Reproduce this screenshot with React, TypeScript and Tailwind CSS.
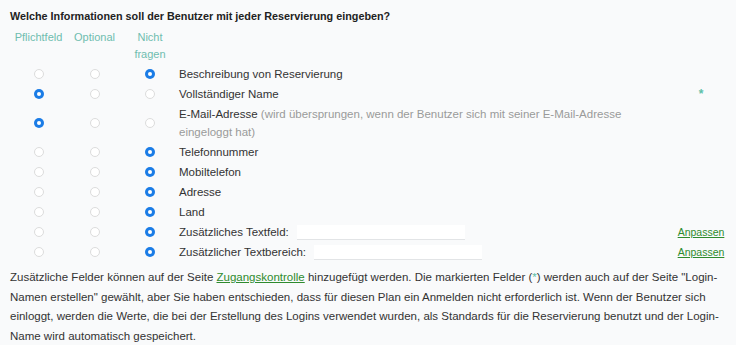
import React from "react";

type Choice = 0 | 1 | 2;

type Field = {
  label: string;
  hint?: string;
  choice: Choice;
  star?: boolean;
  input?: boolean;
};

const fields: Field[] = [
  { label: "Beschreibung von Reservierung", choice: 2 },
  { label: "Vollständiger Name", choice: 0, star: true },
  {
    label: "E-Mail-Adresse",
    hint: "(wird übersprungen, wenn der Benutzer sich mit seiner E-Mail-Adresse eingeloggt hat)",
    choice: 0,
  },
  { label: "Telefonnummer", choice: 2 },
  { label: "Mobiltelefon", choice: 2 },
  { label: "Adresse", choice: 2 },
  { label: "Land", choice: 2 },
  { label: "Zusätzliches Textfeld:", choice: 2, input: true },
  { label: "Zusätzlicher Textbereich:", choice: 2, input: true },
];

function Radio({ checked }: { checked: boolean }) {
  if (checked) {
    return (
      <span className="flex h-[10px] w-[10px] items-center justify-center rounded-full bg-[#1b7ce6]">
        <span className="h-[4px] w-[4px] rounded-full bg-white" />
      </span>
    );
  }
  return <span className="h-[10px] w-[10px] rounded-full border border-[#dcdcdc] bg-white" />;
}

export default function App() {
  return (
    <div
      className="min-h-[345px] w-[736px] bg-[#f9fafb] pl-[10px] pr-[10px] pt-[7px] text-[#333]"
      style={{ fontFamily: '"Liberation Sans", Arial, sans-serif' }}
    >
      <h3 className="text-[10.8px] font-bold leading-[18px] text-[#222]">
        Welche Informationen soll der Benutzer mit jeder Reservierung eingeben?
      </h3>

      <div className="mt-[4px] grid grid-cols-[57px_55px_56px_1fr_50px] text-[11px] leading-[17px] text-[#6fbdaf]">
        <div className="text-center">Pflichtfeld</div>
        <div className="text-center">Optional</div>
        <div className="mx-auto w-[40px] text-center">Nicht fragen</div>
      </div>

      <div className="mt-px">
        {fields.map((f) => (
          <div
            key={f.label}
            className="grid grid-cols-[57px_55px_56px_1fr_50px] items-center py-px text-[11.5px] leading-[18px]"
          >
            {[0, 1, 2].map((c) => (
              <div key={c} className="flex justify-center">
                <Radio checked={f.choice === c} />
              </div>
            ))}
            <div className="flex items-center pl-[1px]">
              {f.input ? (
                <>
                  <span>{f.label}</span>
                  <span className="ml-[8px] h-[15px] w-[168px] border-b border-[#e2e4e6] bg-white" />
                </>
              ) : (
                <span>
                  {f.label}
                  {f.hint && <span className="text-[#9a9a9a]"> {f.hint}</span>}
                </span>
              )}
            </div>
            <div className="text-center">
              {f.star && <span className="text-[12px] font-bold text-[#5cc0a8]">*</span>}
              {f.input && (
                <a href="#" className="text-[10.5px] text-[#2e8b2e] underline">
                  Anpassen
                </a>
              )}
            </div>
          </div>
        ))}
      </div>

      <p className="mt-[6px] pb-[4px] text-[11.5px] leading-[19.5px] text-[#333]">
        Zusätzliche Felder können auf der Seite{" "}
        <a href="#" className="text-[#2e8b2e] underline">
          Zugangskontrolle
        </a>{" "}
        hinzugefügt werden. Die markierten Felder (<span className="text-[#5cc0a8]">*</span>) werden auch auf der
        Seite "Login-Namen erstellen" gewählt, aber Sie haben entschieden, dass für diesen Plan ein Anmelden nicht
        erforderlich ist. Wenn der Benutzer sich einloggt, werden die Werte, die bei der Erstellung des Logins
        verwendet wurden, als Standards für die Reservierung benutzt und der Login-Name wird automatisch gespeichert.
      </p>
    </div>
  );
}
